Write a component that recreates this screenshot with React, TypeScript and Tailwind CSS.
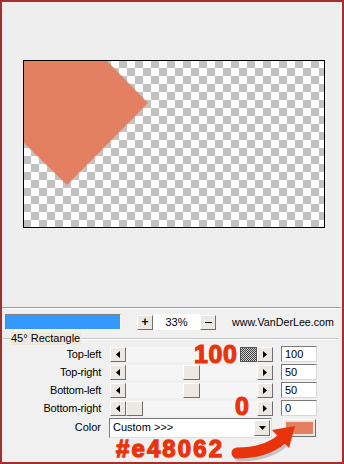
import React from "react"

function ArrowLeft() {
    return (
        <svg width="4" height="7" viewBox="0 0 4 7">
            <path d="M4 0V7L0 3.5Z" fill="#000" />
        </svg>
    )
}

function ArrowRight() {
    return (
        <svg width="4" height="7" viewBox="0 0 4 7">
            <path d="M0 0V7L4 3.5Z" fill="#000" />
        </svg>
    )
}

function Btn({ children, className = "" }: { children?: React.ReactNode; className?: string }) {
    return (
        <div className={`flex items-center justify-center bg-[#ece9e4] border border-t-white border-l-white border-r-[#6e6e6e] border-b-[#6e6e6e] ${className}`}>
            {children}
        </div>
    )
}

function SliderRow({ label, value, thumb }: { label: string; value: string; thumb: React.ReactNode }) {
    return (
        <div className="flex items-center h-[18px]">
            <div className="w-[99px] text-right text-[11px] tracking-[-0.2px] leading-none">{label}</div>
            <div className="ml-[9px] flex items-center">
                <Btn className="w-[16px] h-[15px]">
                    <ArrowLeft />
                </Btn>
                <div className="w-[131px] h-[15px] bg-[#f5f5f5] flex items-center">{thumb}</div>
                <Btn className="w-[16px] h-[15px]">
                    <ArrowRight />
                </Btn>
            </div>
            <div className="ml-[8px] w-[36px] h-[16px] bg-white border border-t-[#7a7a7a] border-l-[#7a7a7a] border-r-[#d8d8d8] border-b-[#d8d8d8] text-[11px] leading-[14px] pl-[3px]">
                {value}
            </div>
        </div>
    )
}

export default function App() {
    return (
        <div className="relative w-[344px] h-[464px] border-2 border-[#a3302a] bg-[#f0f0f0] flex flex-col font-['Liberation_Sans',Arial,sans-serif] text-black overflow-hidden">
            {/* preview area */}
            <div className="h-[306px] bg-[#eeeeee] border-b border-[#9a9a9a] border-r-2 border-r-[#f9f9f9] pl-[21px] pt-[58px]">
                <svg width="302" height="168" viewBox="0 0 302 168">
                    <defs>
                        <pattern id="chk" width="16" height="16" patternUnits="userSpaceOnUse">
                            <rect width="16" height="16" fill="#fefefe" />
                            <rect width="8" height="8" fill="#c2c2c2" />
                            <rect x="8" y="8" width="8" height="8" fill="#c2c2c2" />
                        </pattern>
                    </defs>
                    <rect width="302" height="168" fill="url(#chk)" />
                    <polygon points="1,1 84,1 125,43 44,125 1,83" fill="#e48062" />
                    <rect x="0.5" y="0.5" width="301" height="167" fill="none" stroke="#000" />
                </svg>
            </div>

            <div className="flex-1 border-t border-white">
                {/* zoom bar */}
                <div className="flex items-center h-[16px] mt-[5px]">
                    <div className="ml-[3px] w-[116px] h-[16px] bg-[#3399ff] border border-t-[#808080] border-l-[#808080] border-r-white border-b-white" />
                    <Btn className="ml-[16px] w-[16px] h-[15px] text-[12px] font-bold leading-none">+</Btn>
                    <div className="w-[47px] h-[16px] bg-white flex items-center justify-center text-[11px]">33%</div>
                    <Btn className="w-[16px] h-[15px]">
                        <div className="w-[7px] h-[1px] bg-black" />
                    </Btn>
                    <div className="ml-[16px] text-[10.7px] leading-none">www.VanDerLee.com</div>
                </div>

                {/* group box */}
                <div className="relative mt-[8px] ml-[1px] mr-[4px] border-t border-[#c6c6c6] shadow-[inset_0_1px_0_#fff] pt-[6px]">
                    <div className="absolute left-[7px] -top-[7px] px-[1px] h-[13px] bg-[#ede9dd] text-[11px] leading-[13px]">45° Rectangle</div>
                    <div className="-ml-[1px]">
                        <SliderRow
                            label="Top-left"
                            value="100"
                            thumb={
                                <div className="ml-[114px] w-[17px] h-[15px] border border-[#555] bg-[repeating-conic-gradient(#3a3a3a_0%_25%,#d8d8d8_0%_50%)] bg-[length:2px_2px]" />
                            }
                        />
                        <SliderRow label="Top-right" value="50" thumb={<Btn className="ml-[57px] w-[17px] h-[15px]" />} />
                        <SliderRow label="Bottom-left" value="50" thumb={<Btn className="ml-[57px] w-[17px] h-[15px]" />} />
                        <SliderRow label="Bottom-right" value="0" thumb={<Btn className="w-[17px] h-[15px]" />} />

                        {/* colour row */}
                        <div className="flex items-center h-[21px]">
                            <div className="w-[99px] text-right text-[11px] leading-none">Color</div>
                            <div className="ml-[8px] w-[163px] h-[20px] bg-white border border-t-[#7a7a7a] border-l-[#7a7a7a] border-r-[#e0e0e0] border-b-[#e0e0e0] flex items-center">
                                <div className="flex-1 pl-[3px] text-[11px] leading-none">Custom &gt;&gt;&gt;</div>
                                <Btn className="mr-[1px] w-[16px] h-[16px]">
                                    <svg width="7" height="4" viewBox="0 0 7 4">
                                        <path d="M0 0H7L3.5 4Z" fill="#000" />
                                    </svg>
                                </Btn>
                            </div>
                            <div className="ml-[11px] w-[33px] h-[18px] p-[2px] bg-[#ece9e4] border border-t-white border-l-white border-r-[#6e6e6e] border-b-[#6e6e6e]">
                                <div className="w-full h-full bg-[#e48062]" />
                            </div>
                        </div>
                    </div>
                </div>
            </div>

            {/* annotations */}
            <div className="absolute left-[192px] top-[340px] text-[25px] leading-[25px] font-bold tracking-[0.6px] [-webkit-text-stroke:1.2px_#e8340c] text-[#e8340c]">100</div>
            <div className="absolute left-[233px] top-[392px] text-[25px] leading-[25px] font-bold [-webkit-text-stroke:1.2px_#e8340c] text-[#e8340c]">0</div>
            <div className="absolute left-[114px] top-[435px] text-[24px] leading-[24px] font-bold tracking-[2.1px] [-webkit-text-stroke:1.3px_#e8340c] text-[#e8340c]">#e48062</div>
            <svg className="absolute left-[228px] top-[414px]" width="74" height="48" viewBox="0 0 74 48">
                <path d="M9 40 C27 40 42 36 54 26" fill="none" stroke="#000" strokeOpacity="0.18" strokeWidth="11" strokeLinecap="round" />
                <path d="M7 37 C25 37 40 33 52 23" fill="none" stroke="#e8340c" strokeWidth="11" strokeLinecap="round" />
                <path d="M42 14 L65 10 L59 32 Z" fill="#e8340c" />
            </svg>
        </div>
    )
}
